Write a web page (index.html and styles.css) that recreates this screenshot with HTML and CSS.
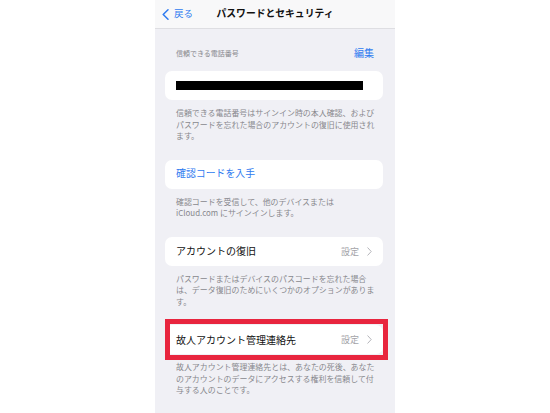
FILE: index.html
```html
<!DOCTYPE html>
<html lang="ja">
<head>
<meta charset="utf-8">
<title>パスワードとセキュリティ</title>
<link rel="stylesheet" href="styles.css">
</head>
<body>
<div class="phone">
  <header class="nav">
    <a class="back">
      <svg class="back-chev" width="7" height="11" viewBox="0 0 7 11"><path d="M6 0.8 L1.2 5.5 L6 10.2" fill="none" stroke="currentColor" stroke-width="1.5" stroke-linecap="round" stroke-linejoin="round"/></svg>
      <span>戻る</span>
    </a>
    <h1 class="nav-title">パスワードとセキュリティ</h1>
  </header>

  <main class="content">
    <div class="sec-head">
      <span class="sec-label">信頼できる電話番号</span>
      <span class="sec-action">編集</span>
    </div>
    <div class="card">
      <span class="redacted"></span>
    </div>
    <p class="foot">信頼できる電話番号はサインイン時の本人確認、および<br>パスワードを忘れた場合のアカウントの復旧に使用され<br>ます。</p>

    <div class="card gap">
      <span class="link">確認コードを入手</span>
    </div>
    <p class="foot">確認コードを受信して、他のデバイスまたは<br>iCloud.com にサインインします。</p>

    <div class="card gap">
      <span class="label">アカウントの復旧</span>
      <span class="detail">設定
        <svg width="5" height="9" viewBox="0 0 5 9"><path d="M0.8 0.8 L4.2 4.5 L0.8 8.2" fill="none" stroke="currentColor" stroke-width="1" stroke-linecap="round" stroke-linejoin="round"/></svg>
      </span>
    </div>
    <p class="foot">パスワードまたはデバイスのパスコードを忘れた場合<br>は、データ復旧のためにいくつかのオプションがありま<br>す。</p>

    <div class="card gap marked">
      <span class="label">故人アカウント管理連絡先</span>
      <span class="detail">設定
        <svg width="5" height="9" viewBox="0 0 5 9"><path d="M0.8 0.8 L4.2 4.5 L0.8 8.2" fill="none" stroke="currentColor" stroke-width="1" stroke-linecap="round" stroke-linejoin="round"/></svg>
      </span>
    </div>
    <p class="foot">故人アカウント管理連絡先とは、あなたの死後、あなた<br>のアカウントのデータにアクセスする権利を信頼して付<br>与する人のことです。</p>
  </main>
</div>
</body>
</html>
```

FILE: styles.css
```css
html, body {
  margin: 0;
  padding: 0;
  background: #ffffff;
}

body {
  width: 550px;
  height: 413px;
  overflow: hidden;
  font-family: "Noto Sans CJK JP", "Noto Sans", sans-serif;
}

.phone {
  width: 240px;
  height: 413px;
  margin-left: 155px;
  background: #f0f0f5;
  overflow: hidden;
}

/* navigation bar */
.nav {
  position: relative;
  height: 28px;
  background: #f8f8f9;
  border-bottom: 1px solid #dedee2;
  display: flex;
  align-items: center;
  justify-content: center;
}

.back {
  position: absolute;
  left: 7px;
  top: 0;
  height: 28px;
  display: flex;
  align-items: center;
  gap: 5px;
  color: #2f7bf0;
  font-size: 9.5px;
  line-height: 1;
}

.back-chev {
  display: block;
}

.nav-title {
  margin: 0;
  font-size: 9.8px;
  font-weight: 700;
  color: #111;
  line-height: 1;
}

/* grouped list */
.content {
  padding: 0 12px 0 10px;
}

.sec-head {
  height: 42px;
  padding-top: 6px;
  box-sizing: border-box;
  display: flex;
  align-items: center;
  justify-content: space-between;
  padding-left: 11px;
  padding-right: 9px;
}

.sec-label {
  font-size: 7px;
  color: #8a8a8f;
  line-height: 1;
}

.sec-action {
  font-size: 10px;
  color: #2f7bf0;
  line-height: 1;
}

.card {
  height: 29px;
  background: #ffffff;
  border-radius: 7px;
  display: flex;
  align-items: center;
  justify-content: space-between;
  padding: 0 11px;
}

.card:first-of-type {
  height: 28px;
}

.gap {
  margin-top: 18px;
}

.redacted {
  display: block;
  width: 187px;
  height: 9px;
  background: #000;
}

.link {
  font-size: 9.9px;
  color: #2f7bf0;
  line-height: 1;
}

.label {
  font-size: 10px;
  color: #111;
  line-height: 1;
}

.detail {
  display: flex;
  align-items: center;
  gap: 8px;
  font-size: 9px;
  color: #a3a3a8;
  line-height: 1;
}

.detail svg {
  display: block;
  color: #b5b5ba;
}

.foot {
  margin: 0;
  padding: 7px 11px 0;
  font-size: 7.95px;
  line-height: 11.5px;
  color: #88888d;
  white-space: nowrap;
}

/* highlighted row */
.marked {
  position: relative;
}

.marked::after {
  content: "";
  position: absolute;
  top: -6px;
  bottom: -6px;
  left: 0;
  right: -5px;
  border: 5.5px solid #e8253e;
  pointer-events: none;
}
```
